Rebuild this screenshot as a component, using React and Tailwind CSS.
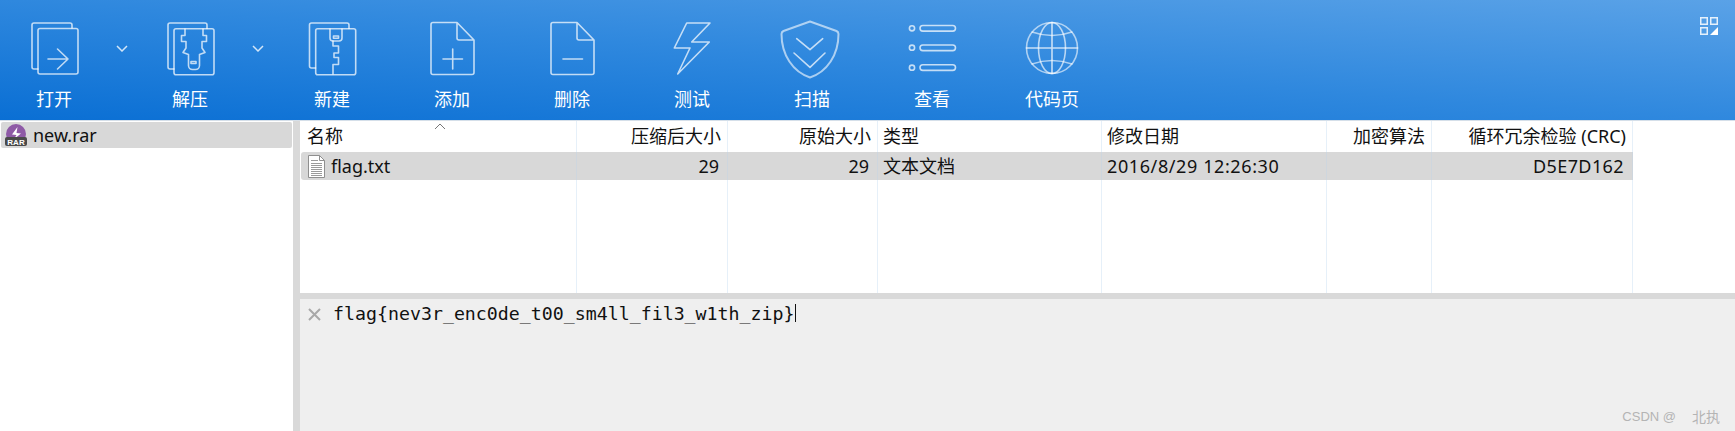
import React from 'react';

const columns = [
  { label: '名称', value: 'flag.txt' },
  { label: '压缩后大小', value: '29', right: true },
  { label: '原始大小', value: '29', right: true },
  { label: '类型', value: '文本文档' },
  { label: '修改日期', value: '2016/8/29 12:26:30', spacing: 'tracking-[0.6px]' },
  { label: '加密算法', value: '', right: true },
  { label: '循环冗余检验 (CRC)', value: 'D5E7D162', right: true, spacing: 'tracking-[0.4px]' },
];

// icons are drawn in page coordinates, the viewBox is moved to the button centre
function ToolIcon({ cx, children }) {
  return (
    <svg
      width="80"
      height="62"
      viewBox={`${cx - 40} 18 80 62`}
      fill="none"
      stroke="#ffffff"
      strokeOpacity="0.72"
      strokeWidth="1.6"
      strokeLinejoin="round"
      strokeLinecap="round"
    >
      {children}
    </svg>
  );
}

function ToolButton({ cx, label, children }) {
  return (
    <div className="flex w-[80px] shrink-0 flex-col items-center pt-[18px]">
      <ToolIcon cx={cx}>{children}</ToolIcon>
      <div className="mt-[6px] whitespace-nowrap text-[18px] leading-[26px] text-white">{label}</div>
    </div>
  );
}

function Chevron() {
  return (
    <div className="flex w-[56px] shrink-0 justify-center pt-[45px]">
      <svg width="12" height="7" viewBox="0 0 12 7" fill="none" stroke="#ffffff" strokeOpacity="0.8" strokeWidth="1.5">
        <path d="M1 1l5 5 5-5" />
      </svg>
    </div>
  );
}

function Toolbar() {
  return (
    <div className="relative flex h-[120px] shrink-0 bg-[linear-gradient(184deg,#5aa2e7_0%,#2f88de_50%,#0a6fd4_100%)] pl-[14px]">
      <ToolButton cx={54} label="打开">
        <path d="M72 28v-3a2 2 0 0 0-2-2H34a2 2 0 0 0-2 2v42a2 2 0 0 0 2 2h4" />
        <rect x="38" y="28.5" width="40" height="45.5" rx="2" />
        <path d="M48 59h20M57.5 49l10.5 10-10.500 10" />
      </ToolButton>
      <Chevron />
      <ToolButton cx={190} label="解压">
        <path d="M207 28.500v-3.500a2 2 0 0 0-2-2h-35a2 2 0 0 0-2 2v42a2 2 0 0 0 2 2h4" />
        <rect x="174" y="28.700" width="40" height="46" rx="2" />
        <path d="M185 29v6.500h-3.500v6h4.500v6.500l-3 4.500 5.500 2v11a4 4 0 0 0 4 4h3a4 4 0 0 0 4-4v-11l5.500-2-3-4.500v-6.500h4.500v-6h-3.500v-6.500" />
        <rect x="191" y="61.500" width="5" height="2" />
      </ToolButton>
      <Chevron />
      <div className="w-[6px] shrink-0" />
      <ToolButton cx={332} label="新建">
        <path d="M349 28.500v-3.500a2 2 0 0 0-2-2h-35.500a2 2 0 0 0-2 2v41a2 2 0 0 0 2 2h4" />
        <rect x="315.700" y="28.700" width="40" height="46" rx="2" />
        <path d="M330 29v9a3 3 0 0 0 3 3h6a3 3 0 0 0 3-3v-9" />
        <rect x="333.500" y="36" width="5" height="2.200" />
        <path d="M333 41v5h5.500v7h-4.500v4.500h4.500v7h-5.500v9.500" />
      </ToolButton>
      <div className="w-[40px] shrink-0" />
      <ToolButton cx={452} label="添加">
        <path d="M457 22.500h-24a2 2 0 0 0-2 2v48a2 2 0 0 0 2 2h39a2 2 0 0 0 2-2V40zv15.500a2 2 0 0 0 2 2h15" />
        <path d="M443 59h19.500M452.700 49v20" />
      </ToolButton>
      <div className="w-[40px] shrink-0" />
      <ToolButton cx={572} label="删除">
        <path d="M577 22.500h-24a2 2 0 0 0-2 2v48a2 2 0 0 0 2 2h39a2 2 0 0 0 2-2V40zv15.500a2 2 0 0 0 2 2h15" />
        <path d="M563 59h19.500" />
      </ToolButton>
      <div className="w-[40px] shrink-0" />
      <ToolButton cx={692} label="测试">
        <path d="M686.700 23H710L691.700 42h17.600L677.700 74 690 48h-15.700z" />
      </ToolButton>
      <div className="w-[40px] shrink-0" />
      <ToolButton cx={812} label="扫描">
        <path d="M810 21.500l-26.500 9.500q-2 1-2 3c0 21 11.500 38 28.500 43.500 17-5.500 28.500-22.500 28.500-43.500q0-2-2-3z" strokeWidth="2" strokeOpacity="0.6" />
        <path d="M796.700 38.700l13.300 11 12.700-11M794 53l16 14.300 15-14.300" />
      </ToolButton>
      <div className="w-[40px] shrink-0" />
      <ToolButton cx={932} label="查看">
        <circle cx="912" cy="28.300" r="2.600" />
        <circle cx="912" cy="47.700" r="2.600" />
        <circle cx="912" cy="67.700" r="2.600" />
        <rect x="920" y="25.500" width="35.500" height="5.600" rx="2.800" />
        <rect x="920" y="45" width="35.500" height="5.600" rx="2.800" />
        <rect x="920" y="64.800" width="35.500" height="5.600" rx="2.800" />
      </ToolButton>
      <div className="w-[40px] shrink-0" />
      <ToolButton cx={1052} label="代码页">
        <circle cx="1052" cy="48" r="25.500" strokeOpacity="0.6" />
        <ellipse cx="1052" cy="48" rx="13.500" ry="25.500" strokeOpacity="0.65" />
        <path d="M1026.500 48h51M1052 22.500v51" />
        <path d="M1032 32q20 7 40 0M1032 64q20-7 40 0" strokeOpacity="0.6" />
      </ToolButton>

      {/* window layout button in the corner */}
      <svg className="absolute right-[17px] top-[17px]" width="18" height="18" viewBox="0 0 18 18" fill="none" stroke="#ffffff" strokeOpacity="0.85" strokeWidth="1.5">
        <rect x="0.750" y="0.750" width="6.500" height="6.500" />
        <rect x="10.750" y="0.750" width="6.500" height="6.500" />
        <rect x="0.750" y="10.750" width="6.500" height="6.500" />
        <path d="M10 18l8-8v8z" fill="#ffffff" stroke="none" />
      </svg>
    </div>
  );
}

function RarIcon() {
  return (
    <svg width="22" height="22" viewBox="0 0 22 22" className="shrink-0">
      <circle cx="11" cy="10" r="10" fill="#8e5aa6" />
      <path d="M12.500 3L7 10.500l4.500.5L9 15l7-5.500-4.500-.5z" fill="#ffffff" />
      <rect x="0" y="13" width="22" height="9" rx="2" fill="#4a4a4a" />
      <text x="11" y="20.500" textAnchor="middle" fontSize="8" fontWeight="700" fill="#ffffff" fontFamily="Liberation Sans, sans-serif">RAR</text>
    </svg>
  );
}

function FileIcon() {
  return (
    <svg width="17" height="23" viewBox="0 0 17 23" className="shrink-0" fill="none">
      <path d="M.5.500h11l5 5v17H.5z" fill="#ffffff" stroke="#8f8f8f" />
      <path d="M11.500.500v5h5" stroke="#8f8f8f" />
      <path d="M3 5.500h7M3 8.500h11M3 10.500h11M3 12.500h11M3 14.500h11M3 16.500h11M3 18.500h11M3 20.500h11" stroke="#9a9a9a" />
    </svg>
  );
}

function FileTable() {
  return (
    <div className="grid h-[172px] shrink-0 grid-cols-[277px_151px_150px_224px_225px_105px_201px_1fr] grid-rows-[31px_28px_1fr] bg-white text-[18px] text-[#111]">
      {columns.map((col, i) => (
        <div
          key={col.label}
          className={`relative flex items-center border-r border-[#e6f0f9] pb-[1px] whitespace-nowrap ${col.right ? 'justify-end pr-[6px]' : i === 0 ? 'pl-[7px]' : 'pl-[5px]'}`}
        >
          {col.label}
          {i === 0 && (
            <svg className="absolute left-[134px] top-[2px]" width="12" height="7" viewBox="0 0 12 7" fill="none" stroke="#777" strokeWidth="1">
              <path d="M1 6l5-5 5 5" />
            </svg>
          )}
        </div>
      ))}
      <div />
      {columns.map((col, i) => (
        <div
          key={col.label + '-row'}
          className={`flex items-center border-r border-[#ced6de] bg-[#d8d8d8] whitespace-nowrap ${col.spacing || ''} ${col.right ? 'justify-end pr-[8px]' : i === 0 ? 'ml-[1px] gap-[6px] rounded-l-[3px] pl-[7px]' : 'pl-[5px]'}`}
        >
          {i === 0 && <FileIcon />}
          {col.value}
        </div>
      ))}
      <div />
      {columns.map((col) => (
        <div key={col.label + '-fill'} className="border-r border-[#e6f0f9]" />
      ))}
      <div />
    </div>
  );
}

export default function App() {
  return (
    <div className="relative flex h-screen w-full flex-col overflow-hidden bg-white font-['Noto_Sans','Noto_Sans_CJK_SC',sans-serif]">
      <Toolbar />
      <div className="h-[1px] shrink-0 bg-[#d5dfe9]" />
      <div className="flex min-h-0 flex-1">
        {/* archive tree */}
        <div className="w-[293px] shrink-0 bg-white px-[1px] pt-[1px]">
          <div className="flex h-[26px] items-center gap-[6px] rounded-[2px] bg-[#d8d8d8] pl-[4px] text-[18px] text-[#111]">
            <RarIcon />
            new.rar
          </div>
        </div>
        <div className="w-[7px] shrink-0 bg-[#d9d9d9]" />

        <div className="flex min-w-0 flex-1 flex-col">
          <FileTable />
          <div className="h-[6px] shrink-0 bg-[#d9d9d9]" />
          {/* comment pane */}
          <div className="flex flex-1 items-start bg-[#efefef] pl-[8px] pt-[5px]">
            <svg className="mt-[4px] shrink-0" width="13" height="13" viewBox="0 0 13 13" fill="none" stroke="#a8a8a8" strokeWidth="2">
              <path d="M1 1l11 11M12 1L1 12" />
            </svg>
            <span className="ml-[12px] font-['DejaVu_Sans_Mono',monospace] text-[18.250px] leading-[19px] text-[#111]">
              flag{'{'}nev3r_enc0de_t00_sm4ll_fil3_w1th_zip{'}'}
            </span>
            <span className="h-[18px] w-[1px] bg-[#111]" />
          </div>
        </div>
      </div>

      {/* watermark */}
      <div className="absolute bottom-[5px] right-[15px] flex gap-[16px] font-['Liberation_Sans','Noto_Sans_CJK_SC',sans-serif] text-[13px] leading-[18px] text-[#b4b4b4]">
        <span>CSDN @</span>
        <span className="text-[14px]">北执</span>
      </div>
    </div>
  );
}
